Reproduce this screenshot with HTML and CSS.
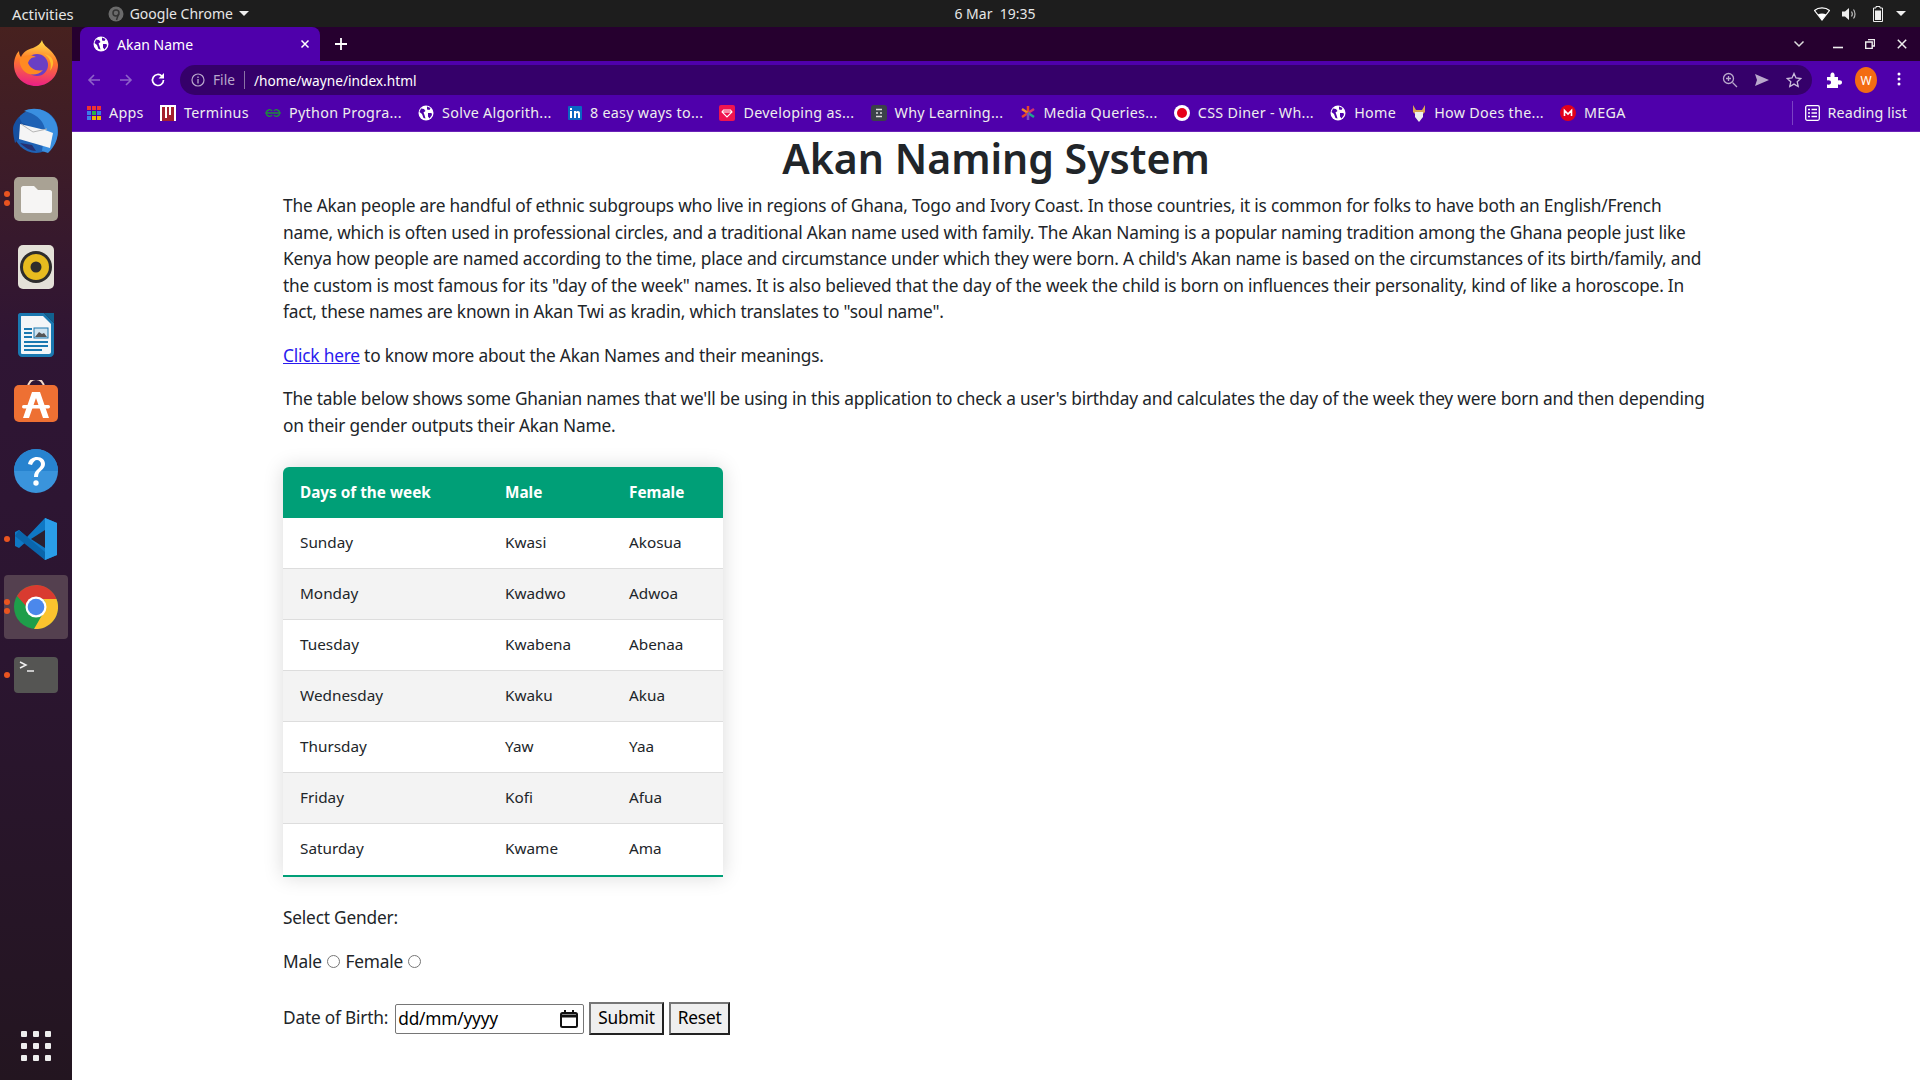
FILE: index.html
```html
<!DOCTYPE html>
<html lang="en">
  <head>
    <meta charset="UTF-8" />
    <meta name="viewport" content="width=device-width, initial-scale=1.0" />
    <title>Akan Name</title>
    <link rel="stylesheet" href="styles.css">
  </head>
  <body>
    <svg class="defs" width="0" height="0">
      <symbol id="globe" viewBox="0 0 16 16">
        <circle cx="8" cy="8" r="7.500" fill="#fff"/>
        <path d="M3 3.500l3 .5 1.500 2-2 1.500 1 2.500 1 3.500-2-.5-1.500-4-2.500-2zM9 1.500l3.500 1.500-1 2-2.500-.5zM10 8l3.500 0 .5 2-2.500 3.500-1.500-2z" fill="#4f00ab"/>
      </symbol>
    </svg>

    <!-- gnome top bar -->
    <header class="topbar">
      <div class="topbar-left">
        <span class="activities">Activities</span>
        <span class="app-menu">
          <svg width="16" height="16" viewBox="0 0 16 16"><circle cx="8" cy="8" r="7.500" fill="#6b6b6b"/><circle cx="8" cy="7" r="3" fill="none" stroke="#333" stroke-width="1.500"/><path d="M10.500 8l-2 6" stroke="#333" stroke-width="1.500"/></svg>
          Google Chrome
          <i class="caret"></i>
        </span>
      </div>
      <div class="clock">6 Mar&nbsp; 19:35</div>
      <div class="tray">
        <svg width="16" height="14" viewBox="0 0 16 14"><path d="M.5 3.500C4.500 0 11.500 0 15.500 3.500L8 13z" fill="none" stroke="#fff" stroke-width="1.200"/><path d="M3.800 7.500c2.500-1.500 5.900-1.500 8.400 0L8 13z" fill="#fff"/></svg>
        <svg class="tray-volume" width="16" height="14" viewBox="0 0 16 14"><path d="M0 4.500h3l4-3.500v12L3 9.500H0z" fill="#eee"/><path d="M9.500 4.500c1 1.500 1 3.500 0 5M11.500 2.500c2 2.500 2 6.500 0 9" fill="none" stroke="#bbb" stroke-width="1.200"/></svg>
        <svg width="12" height="16" viewBox="0 0 12 16"><path d="M4 .5h4v1.500h2.500v13.500h-9V2H4z" fill="none" stroke="#eee"/><rect x="3" y="4.500" width="6" height="9.500" fill="#eee"/></svg>
        <i class="caret"></i>
      </div>
    </header>

    <div class="desktop">
      <!-- ubuntu dock -->
      <nav class="dock">
        <div class="dock-item">
          <svg width="46" height="48" viewBox="0 0 46 48">
            <defs><linearGradient id="fx" x1="0.600" y1="0" x2="0.500" y2="1"><stop offset="0" stop-color="#ffe14a"/><stop offset="0.450" stop-color="#ff7a2a"/><stop offset="1" stop-color="#ea1f86"/></linearGradient></defs>
            <path d="M29 1c1 5 5 7 9 11 5 5 7 11 7 14 0 12-10 21-22 21S1 38 1 26c0-6 2-11 5-14 0 3 1 5 2 6 2-5 7-8 12-9 5-2 8-5 9-8z" fill="url(#fx)"/>
            <circle cx="24" cy="26" r="11" fill="#6a3fc4"/>
            <path d="M7 19c5-3 11-4 16-1-5 0-7 3-8 6 2 5 8 9 15 7-5 6-15 6-20 0-3-4-4-8-3-12z" fill="#ff8a22"/>
            <path d="M31 15c6 3 8 10 6 17 5-6 5-15-6-17z" fill="#ffbd2e"/>
          </svg>
        </div>
        <div class="dock-item">
          <svg width="48" height="48" viewBox="0 0 48 48">
            <circle cx="24" cy="24" r="22" fill="#1f62b5"/>
            <path d="M12 4c10-5 26-2 32 12 4 10 1 22-8 30l-6-2 3-22C31 12 22 6 12 4z" fill="#3a8fe0"/>
            <path d="M1 22c0-4 3-9 6-12l3 6 6 2-4 2-3 10-6 6c-1-4-2-9-2-14z" fill="#1650a0"/>
            <path d="M8 17l25 6 8 3-3 15-31-9z" fill="#f5f5f5"/>
            <path d="M9 17l12 8 14-3" fill="none" stroke="#b5b5b5"/>
            <path d="M8 36c5 5 11 8 16 8l-4-6z" fill="#27306f"/>
          </svg>
        </div>
        <div class="dock-item running-2">
          <svg width="46" height="46" viewBox="0 0 46 46">
            <rect x="1" y="1" width="44" height="44" rx="5" fill="#a9a294"/>
            <path d="M8 12c0-1 1-2 2-2h11l4 4h12c1 0 2 1 2 2v19c0 1-1 2-2 2H10c-1 0-2-1-2-2z" fill="#f6f5f4"/>
          </svg>
        </div>
        <div class="dock-item">
          <svg width="38" height="46" viewBox="0 0 38 46">
            <rect x="1" y="1" width="36" height="44" rx="5" fill="#e4e1d8"/>
            <circle cx="19" cy="23" r="16" fill="#2e2d2c"/>
            <circle cx="19" cy="23" r="13" fill="#e7bb1f"/>
            <circle cx="19" cy="23" r="5.500" fill="#2e2d2c"/>
          </svg>
        </div>
        <div class="dock-item">
          <svg width="38" height="46" viewBox="0 0 38 46">
            <path d="M3 1h24l10 10v30c0 2-2 4-4 4H5c-2 0-4-2-4-4V3c0-1 1-2 2-2z" fill="#1a78b0"/>
            <path d="M5 4h21l8 8v28c0 1-1 2-2 2H5c-1 0-1-1-1-2V5c0-1 0-1 1-1z" fill="#f3f6f8"/>
            <path d="M27 1h10v10z" fill="#11618f"/>
            <path d="M7 17h8M7 21h8M7 25h8M7 30h24M7 34h24M7 38h18" stroke="#1a78b0" stroke-width="2"/>
            <rect x="17" y="16" width="14" height="10" fill="#cfe3ef" stroke="#1a78b0"/>
            <path d="M18 25l4-5 3 2 2-1 3 4z" fill="#555"/>
          </svg>
        </div>
        <div class="dock-item">
          <svg width="46" height="46" viewBox="0 0 46 46">
            <path d="M15 8c0-12 16-12 16 0" fill="none" stroke="#f4d9c6" stroke-width="2"/>
            <rect x="1" y="5" width="44" height="37" rx="5" fill="#ee7033"/>
            <path d="M19 12h8l9 26h-6L23 18l-7 20h-6z" fill="#fff"/>
            <rect x="9" y="25" width="28" height="3.500" rx="1.700" fill="#fff"/>
          </svg>
        </div>
        <div class="dock-item">
          <svg width="46" height="46" viewBox="0 0 46 46">
            <circle cx="23" cy="23" r="22" fill="#3a94dc"/>
            <path d="M1 23a22 22 0 0 1 44 0z" fill="#2783cf"/>
            <path d="M15 16c1-5 5-7 9-7 5 0 8 3 8 7 0 6-7 6-7 13h-4c0-8 7-8 7-13 0-2-2-4-4-4s-4 2-5 5z" fill="#fff"/>
            <circle cx="23" cy="35" r="2.700" fill="#fff"/>
          </svg>
        </div>
        <div class="dock-item running-1">
          <svg width="44" height="44" viewBox="0 0 44 44">
            <path d="M31 1L13 20 5 13 1 15v14l4 2 8-7 18 19 12-5V6z" fill="#0f78c4"/>
            <path d="M31 1l12 5v32l-12 5z" fill="#2a9de8"/>
            <path d="M31 13L17 22l14 9z" fill="#2b2030"/>
            <path d="M5 13l26 22v8L1 19z" fill="#0a65ab"/>
          </svg>
        </div>
        <div class="dock-item running-2 active">
          <svg width="46" height="46" viewBox="0 0 46 46">
            <circle cx="23" cy="23" r="22" fill="#1e9e4a"/>
            <path d="M4 12A22 22 0 0 1 43.500 15H23c-5 0-9 3-10 7z" fill="#d93b30"/>
            <path d="M43.500 15A22 22 0 0 1 21 45l11-19c2-4 1-8-2-11z" fill="#fbc32e"/>
            <circle cx="23" cy="23" r="10.500" fill="#fff"/>
            <circle cx="23" cy="23" r="8.300" fill="#4b88ec"/>
          </svg>
        </div>
        <div class="dock-item running-1">
          <svg width="44" height="36" viewBox="0 0 44 36">
            <rect x="0" y="0" width="44" height="36" rx="4" fill="#555553"/>
            <path d="M6 5l6 3-6 3" fill="none" stroke="#eee" stroke-width="1.500"/>
            <path d="M13 14h7" stroke="#eee" stroke-width="1.500"/>
          </svg>
        </div>
        <div class="dock-apps">
          <svg width="30" height="30" viewBox="0 0 30 30" fill="#eee">
            <rect x="0" y="0" width="6" height="6" rx="1"/><rect x="12" y="0" width="6" height="6" rx="1"/><rect x="24" y="0" width="6" height="6" rx="1"/>
            <rect x="0" y="12" width="6" height="6" rx="1"/><rect x="12" y="12" width="6" height="6" rx="1"/><rect x="24" y="12" width="6" height="6" rx="1"/>
            <rect x="0" y="24" width="6" height="6" rx="1"/><rect x="12" y="24" width="6" height="6" rx="1"/><rect x="24" y="24" width="6" height="6" rx="1"/>
          </svg>
        </div>
      </nav>

      <div class="browser">
        <div class="tabstrip">
          <div class="tab">
            <svg width="16" height="16"><use href="#globe"/></svg>
            <span class="tab-title">Akan Name</span>
            <svg class="tab-close" width="10" height="10" viewBox="0 0 10 10"><path d="M1.500 1.500l7 7M8.500 1.500l-7 7" stroke="#fff" stroke-width="1.500"/></svg>
          </div>
          <svg class="new-tab" width="14" height="14" viewBox="0 0 14 14"><path d="M7 1v12M1 7h12" stroke="#fff" stroke-width="1.800"/></svg>
          <div class="window-btns">
            <svg class="tab-search" width="12" height="8" viewBox="0 0 12 8"><path d="M1.500 1.500L6 6l4.500-4.500" fill="none" stroke="#ddd" stroke-width="1.500"/></svg>
            <svg width="10" height="10" viewBox="0 0 10 10"><path d="M0 8.500h10" stroke="#eee" stroke-width="1.600"/></svg>
            <svg width="10" height="10" viewBox="0 0 10 10"><path d="M3 .5h6.500V7H7.500M.7 3h6.500v6.500H.7z" fill="none" stroke="#eee" stroke-width="1.400"/></svg>
            <svg width="10" height="10" viewBox="0 0 10 10"><path d="M.8.8l8.400 8.400M9.200.8L.8 9.200" stroke="#eee" stroke-width="1.500"/></svg>
          </div>
        </div>

        <div class="toolbar">
          <svg width="16" height="16" viewBox="0 0 16 16"><path d="M14 8H3M8 3L3 8l5 5" fill="none" stroke="#8f62c9" stroke-width="1.600"/></svg>
          <svg width="16" height="16" viewBox="0 0 16 16"><path d="M2 8h11M8 3l5 5-5 5" fill="none" stroke="#8f62c9" stroke-width="1.600"/></svg>
          <svg width="16" height="16" viewBox="0 0 16 16"><path d="M13.500 8a5.500 5.500 0 1 1-1.600-3.900" fill="none" stroke="#fff" stroke-width="1.700"/><path d="M14 1v5.500H8.500z" fill="#fff"/></svg>
          <div class="omnibox">
            <svg width="14" height="14" viewBox="0 0 14 14"><circle cx="7" cy="7" r="6" fill="none" stroke="#b9a8cc" stroke-width="1.200"/><path d="M7 6v4.500M7 3.500v1.500" stroke="#b9a8cc" stroke-width="1.300"/></svg>
            <span class="scheme">File</span>
            <span class="url">/home/wayne/index.html</span>
            <svg class="omni-zoom" width="16" height="16" viewBox="0 0 16 16"><circle cx="6.500" cy="6.500" r="5" fill="none" stroke="#b9a8cc" stroke-width="1.300"/><path d="M10.500 10.500L15 15M4 6.500h5M6.500 4v5" stroke="#b9a8cc" stroke-width="1.300"/></svg>
            <svg width="16" height="14" viewBox="0 0 16 14"><path d="M1 1l14 6-14 6 2-6z" fill="#b9a8cc"/></svg>
            <svg width="16" height="16" viewBox="0 0 16 16"><path d="M8 1.500l2 4.500 4.800.5-3.600 3.200 1 4.800L8 12.100l-4.200 2.400 1-4.800L1.200 6.500 6 6z" fill="none" stroke="#cbbcdc" stroke-width="1.300"/></svg>
          </div>
          <svg class="ext" width="16" height="16" viewBox="0 0 16 16"><path d="M1 5h3.500C4 2 5 .5 6.500.5S9 2 8.500 5H12v3.500c3-.5 4 .5 4 2s-1 2.500-4 2V16H1v-3.500c3 .5 4-.5 4-2S4 8 1 8.500z" fill="#fff"/></svg>
          <span class="avatar">W</span>
          <svg class="kebab" width="4" height="14" viewBox="0 0 4 14" fill="#fff"><circle cx="2" cy="2" r="1.500"/><circle cx="2" cy="7" r="1.500"/><circle cx="2" cy="12" r="1.500"/></svg>
        </div>

        <div class="bookmarks">
          <a class="bm">
            <svg width="14" height="14" viewBox="0 0 14 14"><path d="M0 0h4v4H0z" fill="#e33"/><path d="M5 0h4v4H5z" fill="#e33"/><path d="M10 0h4v4h-4z" fill="#e33"/><path d="M0 5h4v4H0z" fill="#3b7de8"/><path d="M5 5h4v4H5z" fill="#2ab34a"/><path d="M10 5h4v4h-4z" fill="#3b7de8"/><path d="M0 10h4v4H0z" fill="#3b7de8"/><path d="M5 10h4v4H5z" fill="#f4b400"/><path d="M10 10h4v4h-4z" fill="#f4b400"/></svg>
            Apps
          </a>
          <a class="bm">
            <svg width="16" height="16" viewBox="0 0 16 16"><rect width="16" height="16" fill="#fff"/><path d="M2 2h3v11h2V2h2v8h2V2h3v14H2z" fill="#a3202f"/></svg>
            Terminus
          </a>
          <a class="bm">
            <svg width="16" height="10" viewBox="0 0 16 10"><path d="M8 5H1c1-4 5-4 6-2M8 5h7c-1-4-5-4-6-2M8 5H1c1 4 5 4 6 2M8 5h7c-1 4-5 4-6 2" fill="none" stroke="#1f8a3c" stroke-width="1.300"/></svg>
            Python Progra...
          </a>
          <a class="bm"><svg width="16" height="16"><use href="#globe"/></svg>Solve Algorith...</a>
          <a class="bm">
            <svg width="14" height="14" viewBox="0 0 14 14"><rect width="14" height="14" rx="1" fill="#0a66c2"/><path d="M2 5h2v7H2zM2 2h2v2H2zM6 5h2v1c1-1.500 4-1.500 4 1.500V12h-2V8c0-1.500-2-1.500-2 0v4H6z" fill="#fff"/></svg>
            8 easy ways to...
          </a>
          <a class="bm">
            <svg width="16" height="16" viewBox="0 0 16 16"><rect width="16" height="16" rx="2" fill="#f0144f"/><path d="M4.500 5h7L13 7l-5 5-5-5zM3 7h10" fill="none" stroke="#fff" stroke-width="1.100"/></svg>
            Developing as...
          </a>
          <a class="bm">
            <svg width="16" height="16" viewBox="0 0 16 16"><rect width="16" height="16" rx="3" fill="#3b4248"/><path d="M5 4.500h6M5 8h2M9 8h2M5 11.500h6" stroke="#ddd" stroke-width="1.500"/></svg>
            Why Learning...
          </a>
          <a class="bm">
            <svg width="16" height="16" viewBox="0 0 16 16" stroke-width="2.500"><path d="M8 1v6" stroke="#e8452c"/><path d="M2 4l6 4" stroke="#f08a24"/><path d="M14 4L8 8" stroke="#d3346f"/><path d="M2 12l6-4" stroke="#e8452c"/><path d="M14 12L8 8" stroke="#1fa58f"/><path d="M8 15V8" stroke="#7a4cc0"/></svg>
            Media Queries...
          </a>
          <a class="bm">
            <svg width="16" height="16" viewBox="0 0 16 16"><circle cx="8" cy="8" r="8" fill="#fff"/><circle cx="8" cy="8" r="5" fill="#e6001a"/></svg>
            CSS Diner - Wh...
          </a>
          <a class="bm"><svg width="16" height="16"><use href="#globe"/></svg>Home</a>
          <a class="bm">
            <svg width="14" height="18" viewBox="0 0 14 18"><path d="M1 1l3 5h6l3-5v7l-2 2H3L1 8z" fill="#d9a653"/><path d="M3 8h8v5l-4 5-4-5z" fill="#eee"/></svg>
            How Does the...
          </a>
          <a class="bm">
            <svg width="16" height="16" viewBox="0 0 16 16"><circle cx="8" cy="8" r="8" fill="#e2001a"/><path d="M4.500 11V5.500L8 9l3.500-3.500V11" fill="none" stroke="#fff" stroke-width="1.600"/></svg>
            MEGA
          </a>
          <a class="bm reading">
            <svg width="15" height="16" viewBox="0 0 15 16"><rect x=".7" y=".7" width="13.600" height="14.600" rx="1.500" fill="none" stroke="#fff" stroke-width="1.300"/><path d="M3 4.500h2M6.500 4.500H12M3 8h2M6.500 8H12M3 11.500h2M6.500 11.500H12" stroke="#fff" stroke-width="1.300"/></svg>
            Reading list
          </a>
        </div>

        <main class="page">
          <h1>Akan Naming System</h1>
          <p>The Akan people are handful of ethnic subgroups who live in regions of Ghana, Togo and Ivory Coast. In those countries, it is common for folks to have both an English/French name, which is often used in professional circles, and a traditional Akan name used with family. The Akan Naming is a popular naming tradition among the Ghana people just like Kenya how people are named according to the time, place and circumstance under which they were born. A child's Akan name is based on the circumstances of its birth/family, and the custom is most famous for its "day of the week" names. It is also believed that the day of the week the child is born on influences their personality, kind of like a horoscope. In fact, these names are known in Akan Twi as kradin, which translates to "soul name".</p>
          <p><a href="#">Click here</a> to know more about the Akan Names and their meanings.</p>
          <p>The table below shows some Ghanian names that we'll be using in this application to check a user's birthday and calculates the day of the week they were born and then depending on their gender outputs their Akan Name.</p>

          <table class="names">
            <thead>
              <tr><th>Days of the week</th><th>Male</th><th>Female</th></tr>
            </thead>
            <tbody>
              <tr><td>Sunday</td><td>Kwasi</td><td>Akosua</td></tr>
              <tr><td>Monday</td><td>Kwadwo</td><td>Adwoa</td></tr>
              <tr><td>Tuesday</td><td>Kwabena</td><td>Abenaa</td></tr>
              <tr><td>Wednesday</td><td>Kwaku</td><td>Akua</td></tr>
              <tr><td>Thursday</td><td>Yaw</td><td>Yaa</td></tr>
              <tr><td>Friday</td><td>Kofi</td><td>Afua</td></tr>
              <tr><td>Saturday</td><td>Kwame</td><td>Ama</td></tr>
            </tbody>
          </table>

          <form class="akan-form">
            <p>Select Gender:</p>
            <p class="gender">
              <label for="male">Male</label>
              <input type="radio" id="male" name="gender" />
              <label for="female">Female</label>
              <input type="radio" id="female" name="gender" />
            </p>
            <div class="dob">
              <label for="dob">Date of Birth:</label>
              <span class="date-field">
                <input type="text" id="dob" value="dd/mm/yyyy" />
                <svg width="18" height="18" viewBox="0 0 18 18"><rect x="1" y="3" width="16" height="14" rx="1.500" fill="none" stroke="#111" stroke-width="2"/><path d="M1 6h16" stroke="#111" stroke-width="3"/><path d="M5 0v3M13 0v3" stroke="#111" stroke-width="2"/></svg>
              </span>
              <button type="submit">Submit</button>
              <button type="reset">Reset</button>
            </div>
          </form>
        </main>
      </div>
    </div>
  </body>
</html>
```

FILE: styles.css
```css
* {
  box-sizing: border-box;
}
html,
body {
  height: 100%;
}
body {
  font-family: "Noto Sans", sans-serif;
  margin: 0;
  overflow: hidden;
  display: flex;
  flex-direction: column;
  height: 1080px;
  color: #212529;
}
svg {
  display: block;
  flex-shrink: 0;
}
.defs {
  position: absolute;
}
.caret {
  display: block;
  width: 0;
  height: 0;
  border-left: 5px solid transparent;
  border-right: 5px solid transparent;
  border-top: 5px solid #eee;
}

/* top bar */
.topbar {
  height: 27px;
  background-color: #1d1d1d;
  color: #e6e6e6;
  font-size: 14px;
  display: grid;
  grid-template-columns: 1fr auto 1fr;
  align-items: center;
  padding: 0 14px 0 12px;
}
.topbar-left {
  display: flex;
  align-items: center;
  gap: 34px;
}
.activities {
  font-size: 14.800px;
}
.app-menu {
  display: flex;
  align-items: center;
  gap: 6px;
}
.clock {
  padding-left: 72px;
  font-size: 14px;
}
.tray {
  display: flex;
  align-items: center;
  justify-content: flex-end;
  gap: 12px;
}
.tray-volume {
  margin-right: 2px;
}

.desktop {
  flex: 1;
  display: flex;
  min-height: 0;
}

/* dock */
.dock {
  width: 72px;
  background: linear-gradient(#47211f 0, #2f1534 30%, #2b1530 60%, #231520 100%);
  display: flex;
  flex-direction: column;
  align-items: center;
  padding-top: 4px;
}
.dock-item {
  position: relative;
  width: 64px;
  height: 64px;
  margin-bottom: 4px;
  border-radius: 4px;
  display: flex;
  align-items: center;
  justify-content: center;
}
.dock-item.active {
  background-color: #54404f;
}
.running-1::before,
.running-2::before,
.running-2::after {
  content: "";
  position: absolute;
  left: 0;
  width: 6px;
  height: 6px;
  border-radius: 50%;
  background-color: #e95420;
}
.running-1::before {
  top: 29px;
}
.running-2::before {
  top: 24px;
}
.running-2::after {
  top: 33px;
}
.dock-apps {
  margin-top: auto;
  margin-bottom: 19px;
}

.browser {
  flex: 1;
  min-width: 0;
  display: flex;
  flex-direction: column;
}

/* tab strip */
.tabstrip {
  height: 34px;
  background-color: #26002f;
  display: flex;
  align-items: center;
  padding-left: 8px;
  color: #fff;
}
.tab {
  width: 240px;
  height: 34px;
  background-color: #4f00ab;
  border-radius: 8px 8px 0 0;
  display: flex;
  align-items: center;
  gap: 8px;
  padding: 0 10px 0 13px;
  font-size: 14px;
}
.tab-title {
  flex: 1;
}
.new-tab {
  margin-left: 14px;
}
.window-btns {
  margin-left: auto;
  display: flex;
  align-items: center;
  gap: 22px;
  padding-right: 13px;
}
.tab-search {
  margin-right: 6px;
}

/* toolbar */
.toolbar {
  height: 34px;
  background-color: #4f00ab;
  display: flex;
  align-items: flex-start;
  gap: 16px;
  padding: 4px 19px 0 14px;
}
.toolbar > svg {
  margin-top: 7px;
}
.omnibox {
  flex: 1;
  height: 30px;
  border-radius: 15px;
  background-color: #35006a;
  display: flex;
  align-items: center;
  gap: 8px;
  padding: 0 10px 0 11px;
  font-size: 13.700px;
  margin-left: -2px;
}
.scheme {
  color: #b9a8cc;
  padding-right: 9px;
  border-right: 1px solid #8a73a5;
  line-height: 18px;
}
.url {
  color: #fff;
  flex: 1;
  padding-left: 1px;
}
.omnibox svg + svg {
  margin-left: 8px;
}
.avatar {
  width: 22px;
  height: 26px;
  margin: 2px 0 0 -3px;
  border-radius: 50%;
  background-color: #f36c13;
  color: #fff;
  font-size: 12px;
  display: flex;
  align-items: center;
  justify-content: center;
}
.ext {
  margin-left: -2px;
}
.kebab {
  margin-left: 4px;
}

/* bookmarks */
.bookmarks {
  height: 37px;
  background-color: #4f00ab;
  border-bottom: 1px solid #6a22b8;
  display: flex;
  align-items: center;
  padding: 0 13px 1px 15px;
  gap: 16.200px;
  font-size: 14.300px;
  letter-spacing: 0.300px;
  color: #eee;
}
.bm {
  display: flex;
  align-items: center;
  gap: 8px;
  white-space: nowrap;
}
.reading {
  margin-left: auto;
  padding-left: 12px;
  border-left: 1px solid #7b42c4;
  line-height: 24px;
  letter-spacing: 0.100px;
}

/* page */
.page {
  flex: 1;
  background-color: #fff;
  padding: 0 211px;
  font-size: 17.300px;
  letter-spacing: -0.200px;
  line-height: 26.500px;
}
.page h1 {
  margin: 0 0 9px;
  text-align: center;
  font-size: 41px;
  font-weight: 600;
  line-height: 52px;
  letter-spacing: 0;
}
.page p {
  margin: 0 0 17px;
}
.page a {
  color: #2a1bee;
}
.names {
  margin: 28px 0 28px;
  width: 440px;
  border-collapse: collapse;
  border-radius: 6px 6px 0 0;
  overflow: hidden;
  box-shadow: 0 0 20px rgba(0, 0, 0, 0.15);
  table-layout: fixed;
  font-size: 15.300px;
  line-height: 20px;
  letter-spacing: 0;
}
.names th:nth-child(1) {
  width: 205px;
}
.names th:nth-child(2) {
  width: 124px;
}
.names th {
  background-color: #009f77;
  color: #fff;
  font-weight: 700;
  text-align: left;
  padding: 15px 17px 16px;
}
.names td {
  padding: 14px 17px 16px;
  border-bottom: 1px solid #ddd;
}
.names tbody tr:nth-child(even) {
  background-color: #f3f3f3;
}
.names tbody tr:last-child td {
  padding-bottom: 17px;
  border-bottom: 2px solid #009f77;
}
.akan-form p {
  margin-bottom: 17px;
}
.gender input {
  margin: 0 1px 0 1px;
}
.dob {
  display: flex;
  align-items: center;
  gap: 5px;
  margin-top: 27px;
}
.date-field {
  position: relative;
  width: 189px;
  height: 30px;
  margin-left: 2px;
}
.date-field input {
  width: 100%;
  height: 100%;
  border: 1px solid #767676;
  border-radius: 2px;
  padding: 0 2px;
  font: inherit;
  letter-spacing: inherit;
  color: #000;
}
.date-field svg {
  position: absolute;
  right: 6px;
  top: 6px;
}
.dob button {
  height: 33px;
  padding: 0 7px;
  background-color: #efefef;
  border: 2px solid;
  border-color: #767676 #222 #222 #767676;
  font: inherit;
  letter-spacing: inherit;
  color: #000;
}
```
